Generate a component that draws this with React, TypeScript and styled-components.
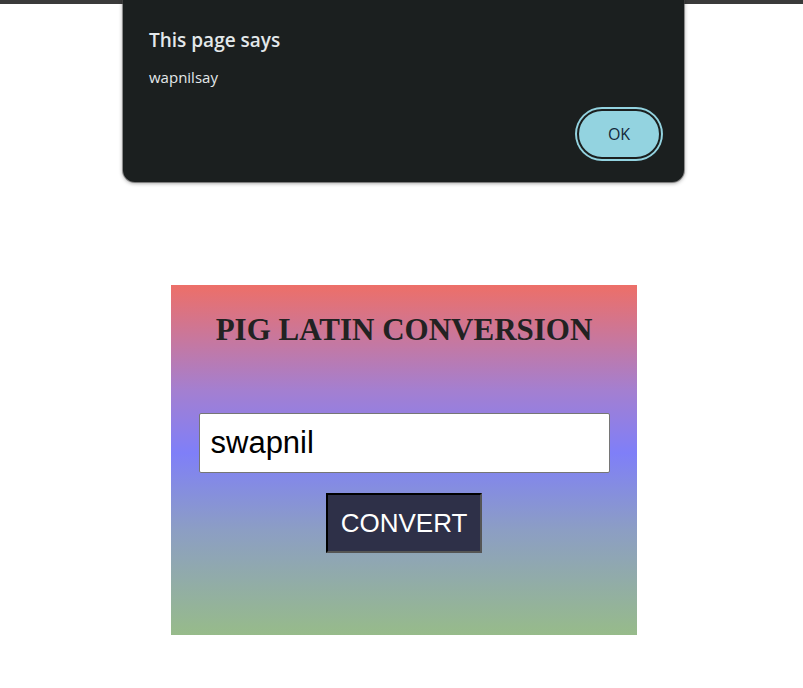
import React from "react";
import styled, { createGlobalStyle } from "styled-components";

const Global = createGlobalStyle`
  html, body { margin: 0; padding: 0; background: #ffffff; }
  body { font-family: "Liberation Serif", "Times New Roman", serif; }
`;

const Page = styled.div`
  position: relative;
  width: 803px;
  height: 688px;
  overflow: hidden;
  background: #ffffff;
`;

const TopStrip = styled.div`
  height: 4px;
  background: #3a3a3a;
`;

const Stage = styled.main`
  display: flex;
  justify-content: center;
  padding: 281px 0 0 5px;
`;

const Card = styled.section`
  width: 466px;
  height: 350px;
  box-sizing: border-box;
  display: flex;
  flex-direction: column;
  align-items: center;
  padding-top: 25px;
  background: linear-gradient(180deg, #ed6f68 0%, #a47fd0 30%, #7f7ff8 48%, #8c9ec4 70%, #97bb8a 100%);
`;

const Title = styled.h1`
  margin: 0;
  font-family: "Liberation Serif", "Times New Roman", serif;
  font-weight: bold;
  font-size: 31px;
  line-height: 40px;
  color: #222222;
`;

const Input = styled.input`
  margin-top: 63px;
  width: 411px;
  height: 60px;
  box-sizing: border-box;
  border: 1px solid #767676;
  border-radius: 2px;
  background: #ffffff;
  padding: 0 11px;
  font-family: "Liberation Sans", Arial, sans-serif;
  font-size: 31px;
  color: #000000;
  outline: none;
`;

const ConvertButton = styled.button`
  margin-top: 20px;
  width: 156px;
  height: 60px;
  box-sizing: border-box;
  background: #2e3048;
  color: #ffffff;
  border: 2px solid;
  border-color: #000000 #555555 #555555 #000000;
  font-family: "Liberation Sans", Arial, sans-serif;
  font-size: 26px;
  padding: 0;
`;

const Dialog = styled.div`
  position: absolute;
  left: 123px;
  top: -12px;
  width: 561px;
  height: 194px;
  box-sizing: border-box;
  background: #1b1f1f;
  border-radius: 12px;
  box-shadow: 0 1px 4px rgba(0, 0, 0, 0.45), 0 0 0 1px rgba(90, 90, 90, 0.5);
  padding: 39px 21px 21px 26px;
  display: flex;
  flex-direction: column;
  font-family: "Segoe UI", "Open Sans", "Noto Sans", sans-serif;
`;

const DialogTitle = styled.div`
  font-size: 19px;
  font-weight: 600;
  line-height: 26px;
  color: #e3e8ea;
`;

const DialogMessage = styled.div`
  margin-top: 13px;
  font-size: 15px;
  line-height: 22px;
  color: #e3e8ea;
`;

const Actions = styled.div`
  margin-top: auto;
  display: flex;
  justify-content: flex-end;
`;

const OkButton = styled.button`
  width: 84px;
  height: 50px;
  box-sizing: border-box;
  border-radius: 25px;
  background: #93d3e0;
  border: 2px solid #1b1f1f;
  box-shadow: 0 0 0 2px #93d3e0;
  margin: 0 2px 2px 0;
  color: #13283a;
  font-family: "Segoe UI", "Open Sans", "Noto Sans", sans-serif;
  font-size: 16px;
  padding: 0;
`;

export default function App() {
  return (
    <Page>
      <Global />
      <TopStrip />
      <Stage>
        <Card>
          <Title>PIG LATIN CONVERSION</Title>
          <Input defaultValue="swapnil" />
          <ConvertButton>CONVERT</ConvertButton>
        </Card>
      </Stage>
      <Dialog role="alertdialog">
        <DialogTitle>This page says</DialogTitle>
        <DialogMessage>wapnilsay</DialogMessage>
        <Actions>
          <OkButton>OK</OkButton>
        </Actions>
      </Dialog>
    </Page>
  );
}
